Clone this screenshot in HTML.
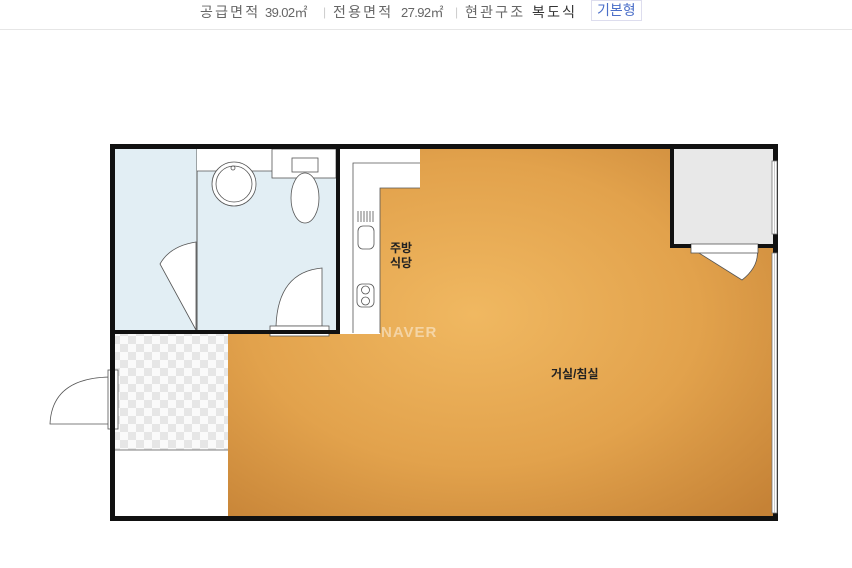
<!DOCTYPE html>
<html><head><meta charset="utf-8"><style>
html,body{margin:0;padding:0;width:852px;height:568px;background:#fff;overflow:hidden}
.hdr{position:absolute;left:0;top:0;width:852px;height:29px;border-bottom:1px solid #e6e6e6;font-family:"Liberation Sans","Noto Sans CJK KR",sans-serif;font-size:14px;color:#666;}
.hdr span{position:absolute;top:3px;white-space:nowrap;line-height:18px}
.k{letter-spacing:2.2px}
.n{font-size:13px;letter-spacing:-0.6px;top:4px!important}
.sep{color:#ccc;font-size:12px}
.b{top:0!important;height:19px;padding:0 5px;border:1px solid #dde;color:#4a6ec8;line-height:19px!important}
</style></head><body>
<div class="hdr">
<span class="k" style="left:200px">공급면적</span>
<span class="n" style="left:265px">39.02㎡</span>
<span class="sep" style="left:323px">|</span>
<span class="k" style="left:333px">전용면적</span>
<span class="n" style="left:401px">27.92㎡</span>
<span class="sep" style="left:455px">|</span>
<span class="k" style="left:465px">현관구조</span>
<span class="k" style="left:532px;color:#333">복도식</span>
<span class="b" style="left:591px">기본형</span>
</div>
<svg width="852" height="568" style="position:absolute;left:0;top:0">
<defs>
<radialGradient id="w" cx="0.45" cy="0.45" r="0.75">
<stop offset="0" stop-color="#f0b861"/><stop offset="0.55" stop-color="#e2a24c"/><stop offset="1" stop-color="#c58236"/>
</radialGradient>
<pattern id="c" width="16" height="16" patternUnits="userSpaceOnUse">
<rect width="16" height="16" fill="#fafafa"/><rect width="8" height="8" fill="#e6e6e6"/><rect x="8" y="8" width="8" height="8" fill="#e6e6e6"/>
</pattern>
</defs>
<path d="M420 149 H774 V516 H228 V334 H380 V188 H420 Z" fill="url(#w)"/>
<rect x="115" y="149" width="221" height="181" fill="#e2eef4"/>
<line x1="197" y1="149" x2="197" y2="330" stroke="#555" stroke-width="1"/>
<rect x="197" y="149" width="139" height="22" fill="#fff"/>
<rect x="272" y="149" width="64" height="29" fill="#fff" stroke="#555" stroke-width="0.8"/>
<rect x="292" y="158" width="26" height="14" fill="#fff" stroke="#555" stroke-width="0.8"/>
<ellipse cx="305" cy="198" rx="14" ry="25" fill="#fff" stroke="#555" stroke-width="0.8"/>
<line x1="197" y1="171" x2="272" y2="171" stroke="#555" stroke-width="0.8"/>
<circle cx="234" cy="184" r="22" fill="#fff" stroke="#555" stroke-width="0.8"/>
<circle cx="234" cy="184" r="18" fill="#fff" stroke="#555" stroke-width="0.8"/>
<circle cx="233" cy="168" r="2" fill="none" stroke="#555" stroke-width="0.8"/>
<path d="M196 242 Q170 246 160 264 L196 330 Z" fill="#fff" stroke="#555" stroke-width="0.8"/>
<path d="M322 268 Q278 272 276 326 H322 Z" fill="#fff" stroke="#555" stroke-width="0.8"/>
<rect x="270" y="326" width="59" height="10" fill="#fff" stroke="#555" stroke-width="0.8"/>
<path d="M340 149 H420 V188 H380 V333 H340 Z" fill="#fff"/>
<path d="M353 333 V163 H420 M380 333 V188 H420" fill="none" stroke="#555" stroke-width="0.8"/>
<g stroke="#555" stroke-width="0.8"><line x1="358" y1="211" x2="358" y2="222"/><line x1="361" y1="211" x2="361" y2="222"/><line x1="364" y1="211" x2="364" y2="222"/><line x1="367" y1="211" x2="367" y2="222"/><line x1="370" y1="211" x2="370" y2="222"/><line x1="373" y1="211" x2="373" y2="222"/></g>
<rect x="358" y="226" width="16" height="23" rx="5" fill="#fff" stroke="#555" stroke-width="0.8"/>
<rect x="357" y="284" width="17" height="23" rx="5" fill="#fff" stroke="#555" stroke-width="0.8"/>
<circle cx="365.5" cy="290" r="4" fill="none" stroke="#555" stroke-width="0.8"/>
<circle cx="365.5" cy="301" r="4" fill="none" stroke="#555" stroke-width="0.8"/>
<rect x="115" y="334" width="113" height="116" fill="url(#c)"/>
<rect x="115" y="450" width="113" height="66" fill="#fff"/>
<line x1="115" y1="450" x2="228" y2="450" stroke="#555" stroke-width="0.8"/>
<path d="M110 377 Q52 378 50 424 H110" fill="none" stroke="#555" stroke-width="0.8"/>
<rect x="108" y="370" width="10" height="59" fill="#fff" stroke="#555" stroke-width="0.8"/>
<rect x="674" y="149" width="100" height="95" fill="#e8e8e8"/>
<path d="M691 248 H757 Q760 266 742 280 Z" fill="#fff" stroke="#555" stroke-width="0.8"/>
<rect x="691" y="244" width="67" height="9" fill="#fff" stroke="#555" stroke-width="0.8"/>
<g fill="#111">
<rect x="110" y="144" width="668" height="5"/>
<rect x="110" y="144" width="5" height="376"/>
<rect x="110" y="516" width="668" height="5"/>
<rect x="773" y="144" width="5" height="377"/>
<rect x="336" y="149" width="4" height="185"/>
<rect x="115" y="330" width="225" height="4"/>
<rect x="670" y="149" width="4" height="99"/>
<rect x="670" y="244" width="21" height="4"/>
<rect x="758" y="244" width="16" height="4"/>
</g>
<rect x="772" y="161" width="5" height="73" fill="#fff" stroke="#777" stroke-width="0.8"/>
<rect x="772" y="253" width="5" height="260" fill="#fff" stroke="#777" stroke-width="0.8"/>
<line x1="774.5" y1="161" x2="774.5" y2="234" stroke="#999" stroke-width="0.5"/>
<line x1="774.5" y1="253" x2="774.5" y2="513" stroke="#999" stroke-width="0.5"/>
<text x="381" y="337" font-family="Liberation Sans,sans-serif" font-weight="bold" font-size="15" fill="#fff" fill-opacity="0.45" letter-spacing="1">NAVER</text>
<g font-family="Liberation Sans,Noto Sans CJK KR,sans-serif" font-size="12" font-weight="bold" fill="#222">
<text x="390" y="252">주방</text><text x="390" y="267">식당</text>
<text x="551" y="378">거실/침실</text>
</g>
</svg>
</body></html>
